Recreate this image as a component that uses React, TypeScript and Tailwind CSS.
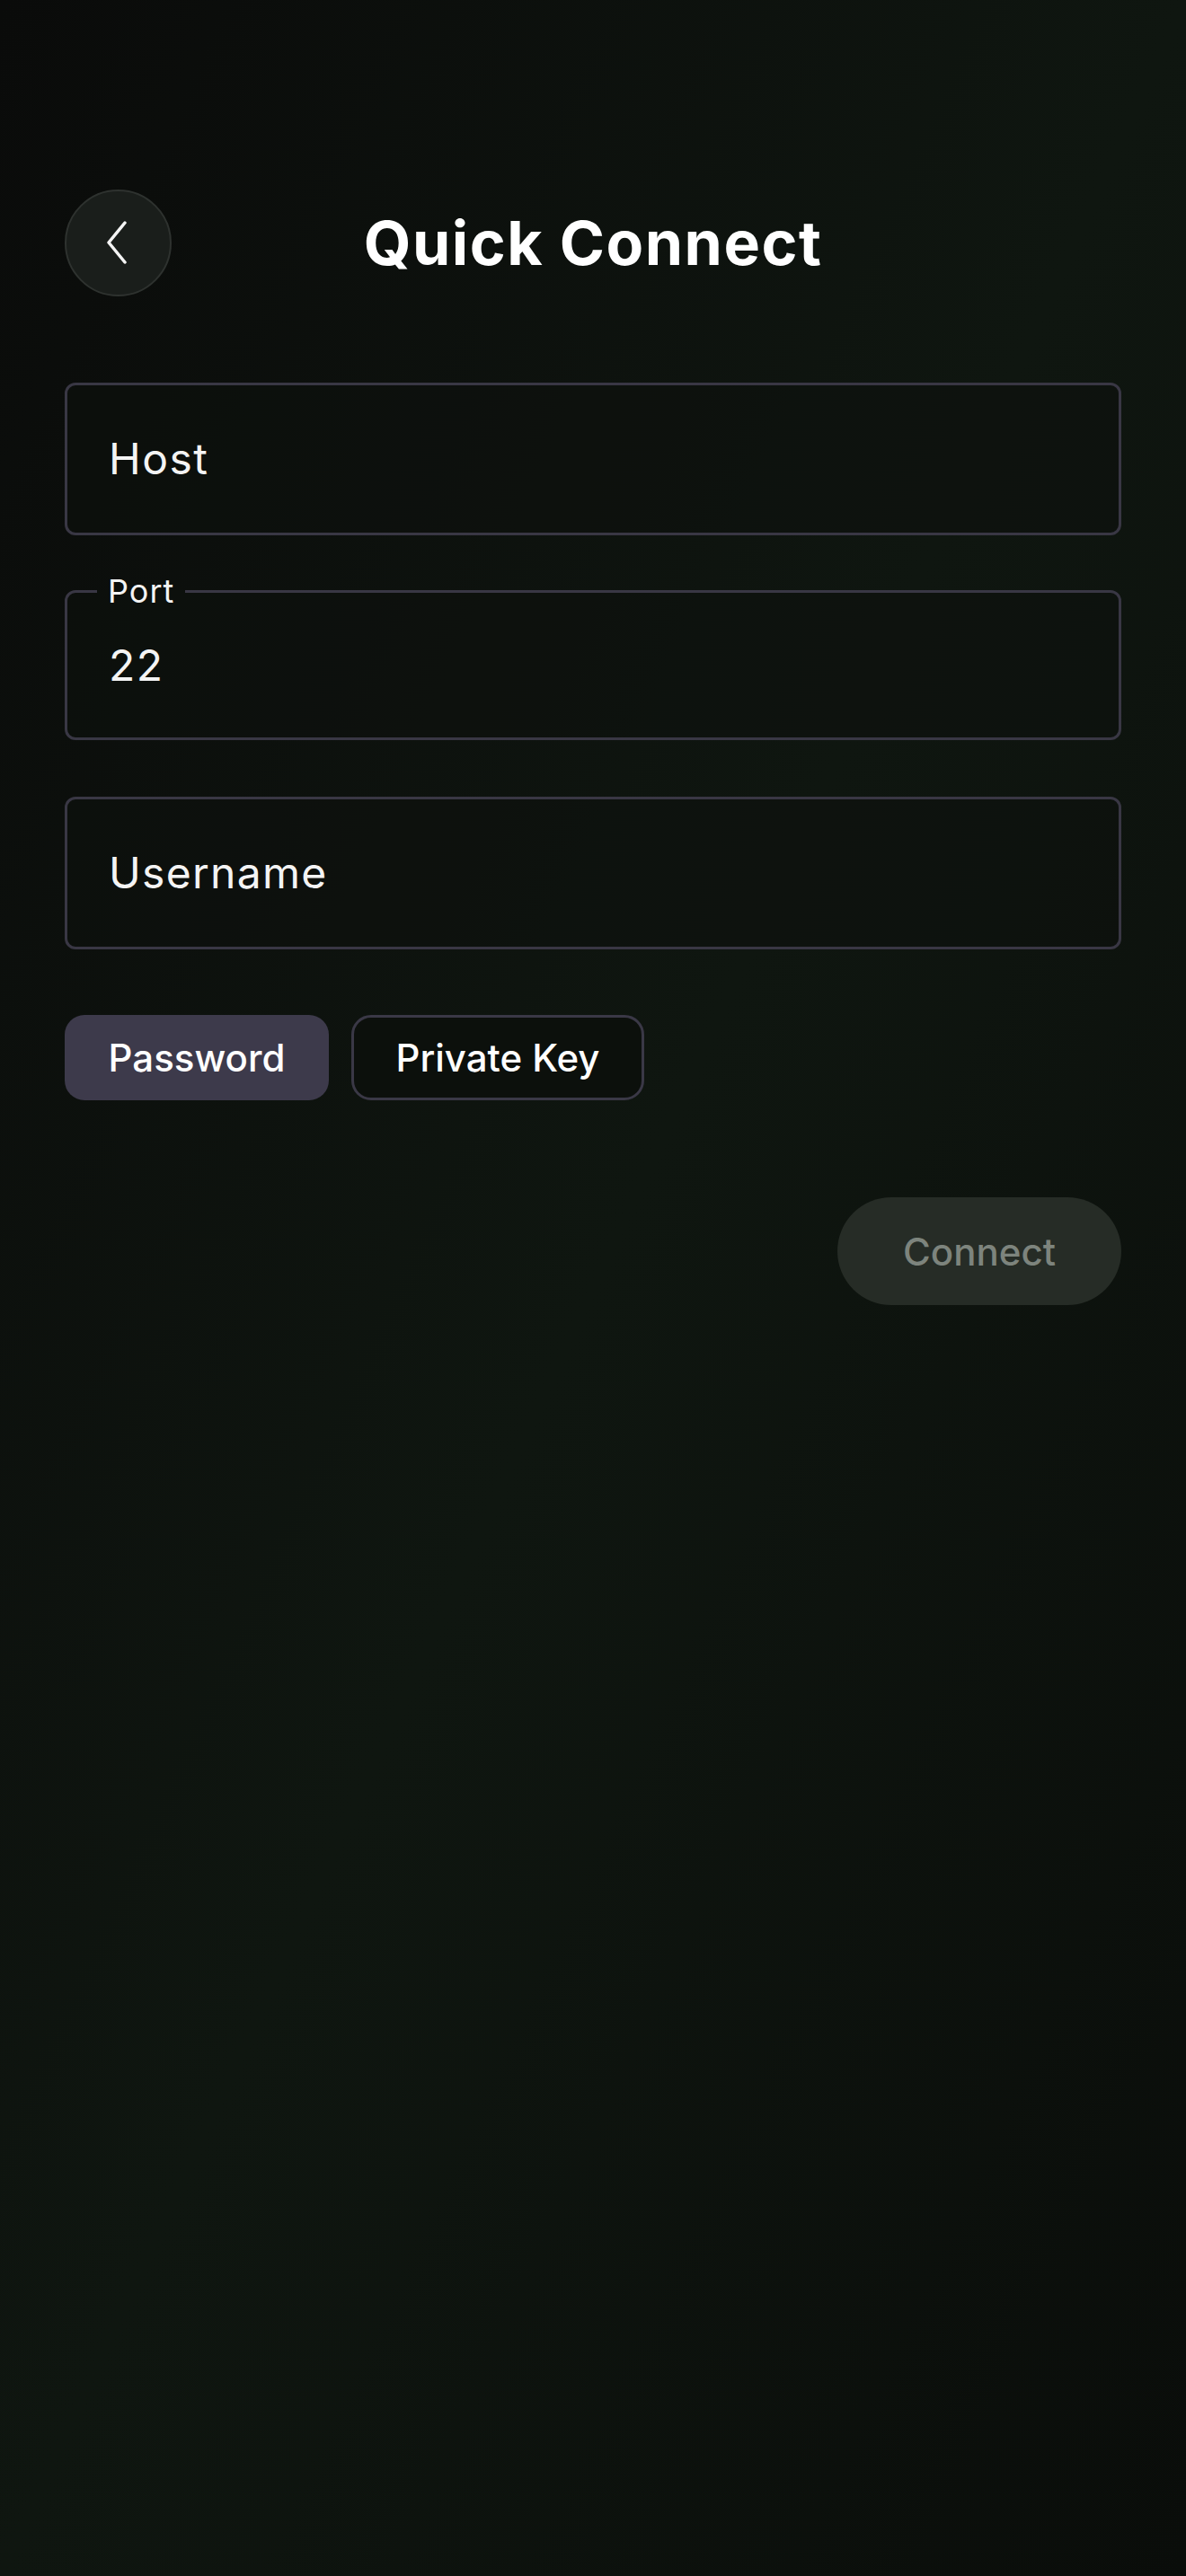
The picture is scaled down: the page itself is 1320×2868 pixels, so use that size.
import React from "react";

export default function App() {
  return (
    <div
      className="min-h-[2868px] w-[1320px] bg-gradient-to-br from-[#0a0b0a] via-[#0f1610] to-[#0a0d0a] text-[#f4f4f4]"
      style={{ fontFamily: "Inter, 'Noto Sans', sans-serif" }}
    >
      <div className="flex flex-col px-[72px] pt-[210px]">
        {/* Header */}
        <div className="grid grid-cols-[120px_1fr_120px] items-center h-[120px]">
          <button className="w-[119px] h-[119px] rounded-full bg-[#1a1e1b] border-[2px] border-[#2e322f] flex items-center justify-center">
            <svg width="30" height="50" viewBox="0 0 30 50" fill="none">
              <polyline
                points="22,3 4,25 22,47"
                stroke="#f4f4f4"
                strokeWidth="3.5"
                strokeLinecap="round"
                strokeLinejoin="round"
              />
            </svg>
          </button>
          <h1 className="text-center text-[68px] font-bold leading-none tracking-[1.5px] text-white">
            Quick Connect
          </h1>
          <div />
        </div>

        {/* Host */}
        <div className="mt-[96px] h-[170px] rounded-[12px] border-[3px] border-[#393744] bg-[#0d110d]/60 flex items-center px-[46px]">
          <span className="text-[48px] tracking-[1.5px] text-[#f4f4f4]">Host</span>
        </div>

        {/* Port */}
        <fieldset className="mt-[41px] rounded-[12px] border-[3px] border-[#393744] bg-[#0d110d]/60 p-0 m-0 min-w-0">
          <legend className="ml-[33px] px-[12px] text-[36px] leading-[42px] tracking-[1px] text-[#f4f4f4]">
            Port
          </legend>
          <div className="h-[142px] pb-[18px] flex items-center px-[46px]">
            <span className="text-[48px] tracking-[1.5px] text-[#f4f4f4]">22</span>
          </div>
        </fieldset>

        {/* Username */}
        <div className="mt-[63px] h-[170px] rounded-[12px] border-[3px] border-[#393744] bg-[#0d110d]/60 flex items-center px-[46px]">
          <span className="text-[48px] tracking-[1.3px] text-[#f4f4f4]">Username</span>
        </div>

        {/* Auth toggle */}
        <div className="mt-[73px] flex gap-[25px]">
          <button className="h-[95px] w-[294px] rounded-[22px] bg-[#3d3a4b] text-[42px] font-medium text-white">
            Password
          </button>
          <button className="h-[95px] w-[326px] rounded-[22px] border-[3px] border-[#3a3846] bg-[#0c100c] text-[42px] font-medium text-white">
            Private Key
          </button>
        </div>

        {/* Connect */}
        <div className="mt-[108px] flex justify-end">
          <button className="h-[120px] w-[316px] rounded-full bg-[#262c26] text-[42px] font-medium text-[#7d847d]">
            Connect
          </button>
        </div>
      </div>
    </div>
  );
}
